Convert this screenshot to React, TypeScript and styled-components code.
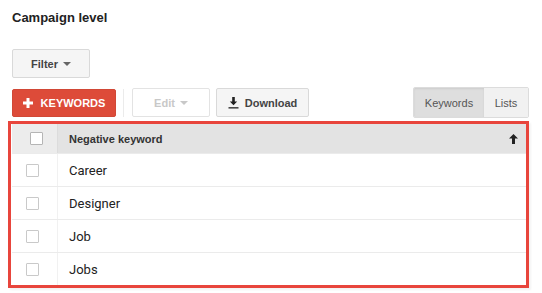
import React from "react"
import styled, { createGlobalStyle } from "styled-components"

const GlobalStyle = createGlobalStyle`
  html, body {
    margin: 0;
    padding: 0;
    background: #ffffff;
  }
  body {
    font-family: "Liberation Sans", Arial, sans-serif;
    color: #222;
  }
`

const Page = styled.div`
  width: 542px;
  height: 293px;
  overflow: hidden;
  padding-top: 10px;
  box-sizing: border-box;
`

const Title = styled.h2`
  margin: 0 0 23px 12px;
  font-size: 13px;
  line-height: 16px;
  font-weight: bold;
  color: #222;
`

const Toolbar = styled.div<{ $gap?: number }>`
  display: flex;
  align-items: center;
  padding: 0 13px 0 12px;
  margin-bottom: ${(p) => p.$gap ?? 0}px;
`

const Btn = styled.button<{ $w: number; $disabled?: boolean }>`
  display: inline-flex;
  align-items: center;
  justify-content: center;
  gap: 6px;
  box-sizing: border-box;
  width: ${(p) => p.$w}px;
  height: 29px;
  padding: 0;
  border: 1px solid ${(p) => (p.$disabled ? "#e3e3e3" : "#d9d9d9")};
  border-radius: 2px;
  background: ${(p) => (p.$disabled ? "#ffffff" : "#f5f5f5")};
  color: ${(p) => (p.$disabled ? "#c8c8c8" : "#444")};
  font-family: "Liberation Sans", Arial, sans-serif;
  font-size: 11px;
  font-weight: bold;
`

const RedBtn = styled(Btn)`
  height: 28px;
  border: 1px solid #d14836;
  background: #dd4b39;
  color: #fff;
  gap: 8px;
  text-transform: uppercase;
`

const Caret = styled.span<{ $c: string }>`
  width: 0;
  height: 0;
  border-left: 4px solid transparent;
  border-right: 4px solid transparent;
  border-top: 4px solid ${(p) => p.$c};
  margin-left: -1px;
`

const Separator = styled.span`
  width: 1px;
  height: 28px;
  background: #ebebeb;
  margin: 0 8px 0 7px;
`

const Gap = styled.span<{ $w: number }>`
  width: ${(p) => p.$w}px;
`

const Spacer = styled.span`
  flex: 1;
`

const Toggle = styled.div`
  display: flex;
  height: 29px;
  border: 1px solid #dcdcdc;
  border-radius: 2px;
  overflow: hidden;
`

const Seg = styled.span<{ $on?: boolean; $w: number }>`
  display: flex;
  align-items: center;
  justify-content: center;
  width: ${(p) => p.$w}px;
  background: ${(p) => (p.$on ? "#dedede" : "#f1f1f1")};
  box-shadow: ${(p) => (p.$on ? "inset 0 1px 2px rgba(0,0,0,0.08)" : "none")};
  color: #555;
  font-size: 11px;
`

const Highlight = styled.div`
  margin: 0 0 0 8px;
  width: 521px;
  box-sizing: border-box;
  border: 3px solid #e8453c;
  padding-left: 1px;
  box-shadow: 2px 2px 2px rgba(0, 0, 0, 0.05);
`

const Row = styled.div<{ $head?: boolean; $last?: boolean }>`
  display: grid;
  grid-template-columns: 46px 1fr;
  height: ${(p) => (p.$head ? 30 : p.$last ? 32 : 33)}px;
  box-sizing: border-box;
  border-bottom: ${(p) => (p.$last ? "none" : "1px solid #ebebeb")};
  background: ${(p) => (p.$head ? "#e3e3e3" : "#fff")};
`

const CheckCell = styled.div<{ $head?: boolean }>`
  display: flex;
  align-items: center;
  padding-left: ${(p) => (p.$head ? 18 : 14)}px;
  background: ${(p) => (p.$head ? "#ececec" : "#fff")};
  border-right: 1px solid ${(p) => (p.$head ? "#dcdcdc" : "#f1f1f1")};
`

const Box = styled.span<{ $head?: boolean }>`
  width: 13px;
  height: 13px;
  box-sizing: border-box;
  border: 1px solid ${(p) => (p.$head ? "#b5b5b5" : "#c9c9c9")};
  background: #fff;
  border-radius: 1px;
`

const NameCell = styled.div<{ $head?: boolean }>`
  display: flex;
  align-items: center;
  justify-content: space-between;
  padding: 0 8px 0 11px;
  font-family: ${(p) =>
    p.$head ? '"Liberation Sans", Arial, sans-serif' : "Roboto, Arial, sans-serif"};
  font-size: ${(p) => (p.$head ? 11 : 13)}px;
  font-weight: ${(p) => (p.$head ? "bold" : "normal")};
  color: ${(p) => (p.$head ? "#333" : "#222")};
`

const keywords = ["Career", "Designer", "Job", "Jobs"]

export default function App() {
  return (
    <Page>
      <GlobalStyle />
      <Title>Campaign level</Title>

      <Toolbar $gap={9}>
        <Btn $w={78}>
          Filter
          <Caret $c="#666" />
        </Btn>
      </Toolbar>

      <Toolbar $gap={3}>
        <RedBtn $w={104}>
          <svg width="10" height="10" viewBox="0 0 10 10">
            <path d="M3.5 0h3v3.5H10v3H6.5V10h-3V6.5H0v-3h3.5z" fill="#fff" />
          </svg>
          Keywords
        </RedBtn>
        <Separator />
        <Btn $w={78} $disabled>
          Edit
          <Caret $c="#c8c8c8" />
        </Btn>
        <Gap $w={6} />
        <Btn $w={93}>
          <svg width="11" height="12" viewBox="0 0 11 12">
            <path d="M4.2 0h2.6v4.5h2.4L5.5 8.3 1.8 4.5h2.4z" fill="#222" />
            <rect x="0.5" y="10.2" width="10" height="1.3" fill="#222" />
          </svg>
          Download
        </Btn>
        <Spacer />
        <Toggle>
          <Seg $on $w={70}>Keywords</Seg>
          <Seg $w={44}>Lists</Seg>
        </Toggle>
      </Toolbar>

      <Highlight>
        <Row $head>
          <CheckCell $head>
            <Box $head />
          </CheckCell>
          <NameCell $head>
            Negative keyword
            <svg width="9" height="10" viewBox="0 0 9 10">
              <path d="M4.5 0L9 4.5H6V10H3V4.5H0z" fill="#222" />
            </svg>
          </NameCell>
        </Row>
        {keywords.map((k, i) => (
          <Row key={k} $last={i === keywords.length - 1}>
            <CheckCell>
              <Box />
            </CheckCell>
            <NameCell>{k}</NameCell>
          </Row>
        ))}
      </Highlight>
    </Page>
  )
}
